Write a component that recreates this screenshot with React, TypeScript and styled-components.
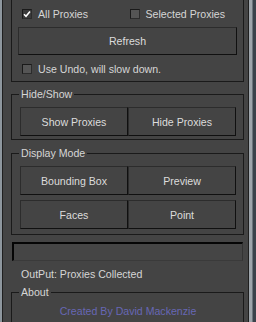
import React, { useState } from 'react'
import styled, { createGlobalStyle } from 'styled-components'

const GlobalStyle = createGlobalStyle`
  html, body {
    margin: 0;
    padding: 0;
    background: #444444;
    overflow: hidden;
  }
  * {
    box-sizing: border-box;
  }
`

const Frame = styled.div`
  display: flex;
  width: 256px;
  height: 322px;
  overflow: hidden;
  font-family: 'Liberation Sans', Arial, sans-serif;
  font-size: 10.6px;
  color: #d6d6d6;
`

const LeftEdge = styled.div`
  width: 3px;
  flex-shrink: 0;
  background: linear-gradient(to right, #8e979e 0, #8e979e 2px, #1f1f1f 2px);
`

const RightEdge = styled.div`
  width: 8px;
  flex-shrink: 0;
  background: linear-gradient(
    to right,
    #1f1f1f 0,
    #1f1f1f 1px,
    #9ea5ab 1px,
    #9ea5ab 4px,
    #6b747b 4px,
    #6b747b 5px,
    #3a424a 5px
  );
`

const Panel = styled.div`
  flex: 1;
  display: flex;
  flex-direction: column;
  padding: 0 4px 0 8px;
  background: #444444;
`

const TopGroup = styled.div`
  display: flex;
  flex-direction: column;
  border: 1px solid #1a1a1a;
  border-top: none;
  padding: 8px 6px 6px 6px;
`

const Group = styled.fieldset<{ $gap?: number; $top: number; $bottom: number }>`
  margin: ${(p) => p.$gap ?? 6}px 0 0 0;
  min-width: 0;
  border: 1px solid #1a1a1a;
  padding: ${(p) => p.$top}px 7px ${(p) => p.$bottom}px 8px;
`

const Legend = styled.legend`
  padding: 0 2px;
  margin-left: -1px;
  line-height: 13px;
  font-size: 10.6px;
  color: #d6d6d6;
`

const CheckRow = styled.div<{ $cols: number }>`
  display: grid;
  grid-template-columns: repeat(${(p) => p.$cols}, 1fr);
  padding-left: 4px;
  height: 12px;
  align-items: center;
`

const CheckLabel = styled.label`
  display: flex;
  align-items: center;
  gap: 6px;
  white-space: nowrap;
  cursor: default;
`

const Box = styled.span<{ $checked: boolean }>`
  width: 10px;
  height: 10px;
  flex-shrink: 0;
  display: flex;
  align-items: center;
  justify-content: center;
  background: ${(p) => (p.$checked ? '#3a3a3a' : '#555555')};
  border: 1px solid #1a1a1a;
  border-right-color: #2c2c2c;
  border-bottom-color: #2c2c2c;
`

const Button = styled.button<{ $h?: number }>`
  height: ${(p) => p.$h ?? 29}px;
  background: #444444;
  color: #dcdcdc;
  font-family: 'Liberation Sans', Arial, sans-serif;
  font-size: 10.6px;
  border: 1px solid #2c2c2c;
  border-right-color: #101010;
  border-bottom-color: #101010;
  padding: 0;
  cursor: default;
`

const ButtonGrid = styled.div`
  display: grid;
  grid-template-columns: 1fr 1fr;
  row-gap: 5px;
`

const Refresh = styled(Button)`
  margin-top: 7px;
`

const UndoRow = styled(CheckRow)`
  margin-top: 8px;
`

const Progress = styled.div`
  margin: 7px 1px 0 1px;
  height: 19px;
  flex-shrink: 0;
  border-top: 2px solid #050505;
  border-left: 2px solid #050505;
  border-right: 1px solid #333333;
  border-bottom: 1px solid #3a3a3a;
  background: #454545;
`

const Output = styled.div`
  margin-top: 7px;
  padding-left: 10px;
  line-height: 13px;
  white-space: nowrap;
`

const Credit = styled.div`
  text-align: center;
  color: #6767b5;
  line-height: 13px;
`

const Check: React.FC<{ label: string; checked: boolean; onToggle: () => void }> = ({
  label,
  checked,
  onToggle,
}) => (
  <CheckLabel onClick={onToggle}>
    <Box $checked={checked}>
      {checked && (
        <svg width="8" height="8" viewBox="0 0 8 8">
          <path d="M1 4.2 L3 6.2 L7 1.5" stroke="#ffffff" strokeWidth="1.6" fill="none" />
        </svg>
      )}
    </Box>
    {label}
  </CheckLabel>
)

export default function App() {
  const [allProxies, setAllProxies] = useState(true)
  const [selected, setSelected] = useState(false)
  const [undo, setUndo] = useState(false)

  return (
    <>
      <GlobalStyle />
      <Frame>
        <LeftEdge />
        <Panel>
          <TopGroup>
            <CheckRow $cols={2}>
              <Check label="All Proxies" checked={allProxies} onToggle={() => setAllProxies((v) => !v)} />
              <Check label="Selected Proxies" checked={selected} onToggle={() => setSelected((v) => !v)} />
            </CheckRow>
            <Refresh $h={28}>Refresh</Refresh>
            <UndoRow $cols={1}>
              <Check label="Use Undo, will slow down." checked={undo} onToggle={() => setUndo((v) => !v)} />
            </UndoRow>
          </TopGroup>

          <Group $top={6} $bottom={3}>
            <Legend>Hide/Show</Legend>
            <ButtonGrid>
              <Button>Show Proxies</Button>
              <Button>Hide Proxies</Button>
            </ButtonGrid>
          </Group>

          <Group $gap={7} $top={6} $bottom={5}>
            <Legend>Display Mode</Legend>
            <ButtonGrid>
              <Button>Bounding Box</Button>
              <Button>Preview</Button>
              <Button>Faces</Button>
              <Button>Point</Button>
            </ButtonGrid>
          </Group>

          <Progress />
          <Output>OutPut: Proxies Collected</Output>

          <Group $gap={5} $top={6} $bottom={10}>
            <Legend>About</Legend>
            <Credit>Created By David Mackenzie</Credit>
          </Group>
        </Panel>
        <RightEdge />
      </Frame>
    </>
  )
}
